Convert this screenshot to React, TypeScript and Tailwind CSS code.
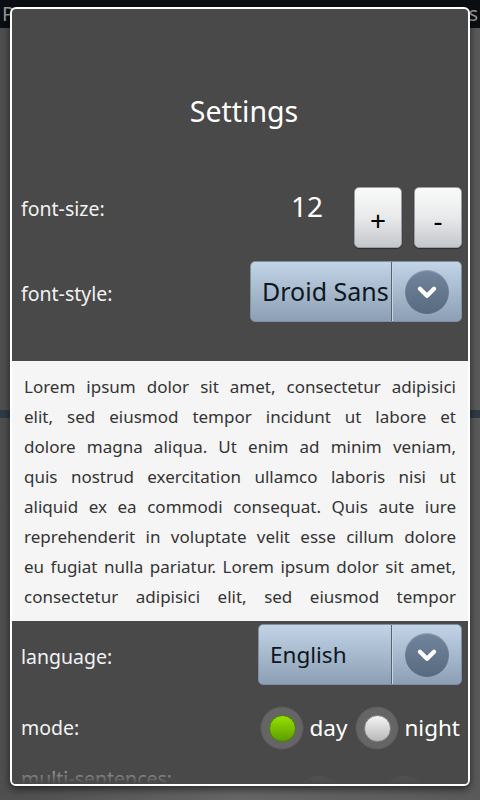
import { ReactNode } from "react";

const font = { fontFamily: '"Noto Sans", "Open Sans", sans-serif' };

const loremLines = [
  "Lorem ipsum dolor sit amet, consectetur adipisici",
  "elit, sed eiusmod tempor incidunt ut labore et",
  "dolore magna aliqua. Ut enim ad minim veniam,",
  "quis nostrud exercitation ullamco laboris nisi ut",
  "aliquid ex ea commodi consequat. Quis aute iure",
  "reprehenderit in voluptate velit esse cillum dolore",
  "eu fugiat nulla pariatur. Lorem ipsum dolor sit amet,",
  "consectetur adipisici elit, sed eiusmod tempor",
  "incidunt ut labore et dolore magna aliqua. Ut enim",
];

function Chevron() {
  return (
    <div className="flex h-[44px] w-[44px] items-center justify-center rounded-full bg-gradient-to-b from-[#71859c] to-[#586a80] shadow-[inset_0_1px_1px_rgba(255,255,255,0.25)]">
      <svg width="26" height="26" viewBox="0 0 24 24" fill="none">
        <path
          d="M5.5 9 L12 15.5 L18.5 9"
          stroke="white"
          strokeWidth="4"
          strokeLinecap="round"
          strokeLinejoin="round"
        />
      </svg>
    </div>
  );
}

function Spinner({
  value,
  width,
  textSize,
}: {
  value: string;
  width: string;
  textSize: string;
}) {
  return (
    <div
      className={`flex h-[61px] ${width} overflow-hidden rounded-[5px] border border-[#7f8fa0] bg-gradient-to-b from-[#c2d4e7] to-[#8c9fb4]`}
    >
      <div
        className={`flex flex-1 items-center overflow-hidden whitespace-nowrap pl-[11px] ${textSize} text-[#0e1620]`}
      >
        {value}
      </div>
      <div className="w-px bg-[#55626f]" />
      <div className="w-px bg-[#c9d6e3]" />
      <div className="flex w-[68px] items-center justify-center">
        <Chevron />
      </div>
    </div>
  );
}

function StepButton({ children }: { children: ReactNode }) {
  return (
    <button className="flex h-[61px] w-[48px] items-center justify-center rounded-[5px] border border-[#9a9da2] bg-gradient-to-b from-[#fafafa] via-[#e8e9ea] to-[#c4c7cc] pt-[4px] text-[28px] text-black shadow-[0_1px_1px_rgba(0,0,0,0.4)]">
      {children}
    </button>
  );
}

function Radio({ checked, label }: { checked: boolean; label: string }) {
  return (
    <div className="flex items-center gap-[5px]">
      <div className="flex h-[44px] w-[44px] items-center justify-center rounded-full bg-[#656565] shadow-[inset_0_0_2px_rgba(0,0,0,0.6)]">
        {checked ? (
          <div className="h-[27px] w-[27px] rounded-full border border-[#4b8200] bg-gradient-to-b from-[#97e000] to-[#5c9e00]" />
        ) : (
          <div className="h-[27px] w-[27px] rounded-full border border-[#8a8a8a] bg-gradient-to-b from-[#f4f4f4] to-[#b9b9b9]" />
        )}
      </div>
      <span className="text-[22.5px] leading-none text-white">{label}</span>
    </div>
  );
}

export default function App() {
  return (
    <div
      className="relative h-[800px] w-[480px] overflow-hidden bg-[#5d5d5d]"
      style={font}
    >
      {/* window behind the dialog */}
      <div className="flex h-[28px] items-center justify-between bg-[#0b0e12] px-[2px] text-[20px] text-[#9a9a9a]">
        <span>P</span>
        <span>s</span>
      </div>
      <div className="h-[382px] bg-gradient-to-r from-[#4f4f4f] via-[#666] to-[#5a5a5a]" />
      <div className="h-[8px] bg-[#2f3b45]" />
      <div className="h-[382px] bg-gradient-to-r from-[#4f4f4f] via-[#666] to-[#5a5a5a]" />

      {/* dialog */}
      <div className="absolute left-[10px] top-[7px] h-[779px] w-[460px] overflow-hidden rounded-[6px] border-2 border-white bg-[#494949] shadow-[0_3px_8px_rgba(0,0,0,0.6)]">
        <div className="flex h-[178px] justify-center pl-[8px] pt-[84px] text-[28.5px] leading-[36px] text-white">
          Settings
        </div>

        <div className="flex h-[61px] items-start pr-[6px]">
          <span className="mt-[8px] flex-1 pl-[9px] text-[19.5px] leading-[28px] text-[#f2f2f2]">
            font-size:
          </span>
          <span className="w-[60px] text-center text-[28px] leading-[38px] text-white">
            12
          </span>
          <div className="ml-[17px] flex gap-[12px]">
            <StepButton>+</StepButton>
            <StepButton>-</StepButton>
          </div>
        </div>

        <div className="mt-[13px] flex items-center pr-[6px]">
          <span className="mt-[5px] flex-1 pl-[9px] text-[19.5px] leading-[28px] text-[#f2f2f2]">
            font-style:
          </span>
          <Spinner value="Droid Sans" width="w-[212px]" textSize="text-[25px]" />
        </div>

        <div className="mt-[39px] h-[260px] overflow-hidden bg-[#f5f5f5] px-[12px] pt-[11px] text-[17px] leading-[30px] text-[#343434]">
          {loremLines.map((line) => (
            <div
              key={line}
              className="whitespace-nowrap text-justify [text-align-last:justify]"
            >
              {line}
            </div>
          ))}
        </div>

        <div className="mt-[3px] flex items-center pr-[6px]">
          <span className="mt-[5px] flex-1 pl-[9px] text-[19.5px] leading-[28px] text-[#f2f2f2]">
            language:
          </span>
          <Spinner value="English" width="w-[204px]" textSize="text-[22.5px]" />
        </div>

        <div className="mt-[21px] flex h-[44px] items-center pr-[8px]">
          <span className="flex-1 pl-[9px] text-[19.5px] leading-[28px] text-[#f2f2f2]">
            mode:
          </span>
          <div className="flex gap-[8px]">
            <Radio checked label="day" />
            <Radio checked={false} label="night" />
          </div>
        </div>

        <div className="mt-[15px] flex items-start pr-[8px]">
          <span className="flex-1 pl-[9px] text-[19.5px] leading-[28px] text-[#f2f2f2]">
            multi-sentences:
          </span>
          <div className="mt-[10px] flex gap-[8px]">
            <Radio checked={false} label="on" />
            <Radio checked={false} label="off" />
          </div>
        </div>

        {/* fading edge of the scroll view */}
        <div className="pointer-events-none absolute bottom-0 left-0 h-[26px] w-full bg-gradient-to-b from-[#494949]/0 to-[#494949]" />
      </div>
    </div>
  );
}
